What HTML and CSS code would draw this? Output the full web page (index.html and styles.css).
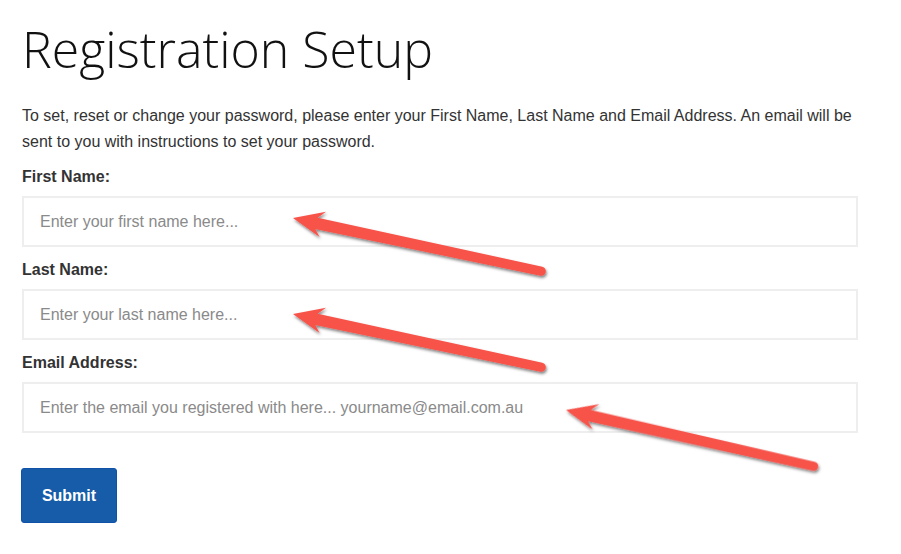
FILE: index.html
```html
<html>
  <head>
    <title>Registration Setup</title>
    <meta charset="utf-8" />
    <meta name="viewport" content="width=device-width" />
    <link rel="stylesheet" href="styles.css">
  </head>
  <body>
    <h1>Registration Setup</h1>
    <p class="intro">To set, reset or change your password, please enter your First Name, Last Name and Email Address. An email will be sent to you with instructions to set your password.</p>

    <form class="setup">
      <div class="field">
        <label for="first">First Name:</label>
        <input id="first" type="text" placeholder="Enter your first name here..." />
      </div>
      <div class="field">
        <label for="last">Last Name:</label>
        <input id="last" type="text" placeholder="Enter your last name here..." />
      </div>
      <div class="field">
        <label for="email">Email Address:</label>
        <input id="email" type="text" placeholder="Enter the email you registered with here... yourname@email.com.au" />
      </div>
      <button class="submit" type="button">Submit</button>
    </form>

    <!-- annotation arrows drawn over the form -->
    <svg class="marks" width="901" height="554" viewBox="0 0 901 554">
      <defs>
        <filter id="shade" x="-20%" y="-50%" width="140%" height="200%">
          <feDropShadow dx="1" dy="2" stdDeviation="1.5" flood-color="#000" flood-opacity="0.5" />
        </filter>
        <path id="arrow" d="M0 0 L31 -13 L24 -5.5 L254 -4.5 A4.5 4.5 0 0 1 254 4.5 L24 6 L30 13 Z" />
      </defs>
      <g class="arrow" filter="url(#shade)">
        <use href="#arrow" transform="translate(293 218) rotate(12.1)" />
        <use href="#arrow" transform="translate(293 314) rotate(12.1)" />
        <use href="#arrow" transform="translate(566 410) rotate(12.8)" />
      </g>
    </svg>
  </body>
</html>
```

FILE: styles.css
```css
body {
  margin: 0;
  padding: 20px 22px;
  width: 836px;
  background: #fff;
  font-family: "Liberation Sans", Arial, sans-serif;
  color: #333;
}

h1 {
  margin: 0;
  font-family: "Open Sans", sans-serif;
  font-weight: 300;
  font-size: 50px;
  line-height: 58px;
  color: #111;
}

.intro {
  margin: 25px 0 12px;
  font-size: 16px;
  line-height: 26px;
}

.field {
  margin-bottom: 13px;
}

.field label {
  display: block;
  font-weight: bold;
  font-size: 16px;
  line-height: 20px;
  margin-bottom: 9px;
}

.field input {
  display: block;
  box-sizing: border-box;
  width: 100%;
  height: 51px;
  margin: 0;
  padding: 0 16px;
  border: 2px solid #eee;
  border-radius: 0;
  font-family: "Liberation Sans", Arial, sans-serif;
  font-size: 16px;
  color: #333;
  outline: none;
}

.field input::placeholder {
  color: #8a8a8a;
}

.submit {
  display: block;
  margin: 35px 0 0 -1px;
  width: 96px;
  height: 55px;
  border: 1px solid #0f52a8;
  border-radius: 3px;
  background: #175ca9;
  color: #fff;
  font-family: "Liberation Sans", Arial, sans-serif;
  font-weight: bold;
  font-size: 16px;
}

.marks {
  position: absolute;
  top: 0;
  left: 0;
  pointer-events: none;
}

.arrow {
  fill: #f7524a;
}
```
